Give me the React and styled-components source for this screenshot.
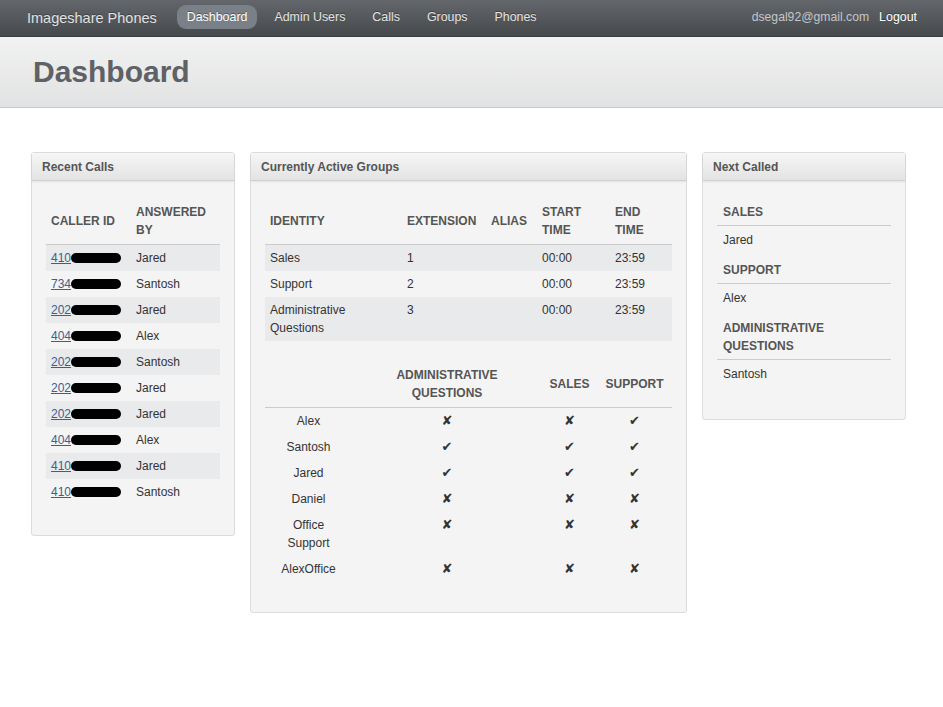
import React from "react";
import styled, { createGlobalStyle } from "styled-components";

const GlobalStyle = createGlobalStyle`
  body {
    margin: 0;
    background: #fff;
    font-family: "Liberation Sans", Arial, sans-serif;
    font-size: 12px;
    line-height: 18px;
    color: #333;
  }
`;

const recentCalls = [
  { prefix: "410", who: "Jared" },
  { prefix: "734", who: "Santosh" },
  { prefix: "202", who: "Jared" },
  { prefix: "404", who: "Alex" },
  { prefix: "202", who: "Santosh" },
  { prefix: "202", who: "Jared" },
  { prefix: "202", who: "Jared" },
  { prefix: "404", who: "Alex" },
  { prefix: "410", who: "Jared" },
  { prefix: "410", who: "Santosh" },
];

const activeGroups = [
  { name: "Sales", ext: "1" },
  { name: "Support", ext: "2" },
  { name: "Administrative Questions", ext: "3" },
];

const members = [
  { name: "Alex", admin: false, sales: false, support: true },
  { name: "Santosh", admin: true, sales: true, support: true },
  { name: "Jared", admin: true, sales: true, support: true },
  { name: "Daniel", admin: false, sales: false, support: false },
  { name: "Office Support", admin: false, sales: false, support: false },
  { name: "AlexOffice", admin: false, sales: false, support: false },
];

const nextCalled = [
  { group: "Sales", who: "Jared" },
  { group: "Support", who: "Alex" },
  { group: "Administrative Questions", who: "Santosh" },
];

export default function App() {
  return (
    <>
      <GlobalStyle />
      <NavBar>
        <Brand>Imageshare Phones</Brand>
        <NavLinks>
          <NavLink active>Dashboard</NavLink>
          <NavLink>Admin Users</NavLink>
          <NavLink>Calls</NavLink>
          <NavLink>Groups</NavLink>
          <NavLink>Phones</NavLink>
        </NavLinks>
        <NavRight>
          <Email>dsegal92@gmail.com</Email>
          <NavLink plain>Logout</NavLink>
        </NavRight>
      </NavBar>

      <PageHeader>
        <h1>Dashboard</h1>
      </PageHeader>

      <Main>
        <Panel width={204}>
          <PanelTitle>Recent Calls</PanelTitle>
          <PanelBody>
            <Table>
              <colgroup>
                <col style={{ width: 85 }} />
                <col />
              </colgroup>
              <thead>
                <tr>
                  <Th>Caller ID</Th>
                  <Th>Answered by</Th>
                </tr>
              </thead>
              <tbody>
                {recentCalls.map((c, i) => (
                  <Row key={i} striped={i % 2 === 0}>
                    <Td>
                      <PhoneLink>
                        {c.prefix}
                        <Redacted />
                      </PhoneLink>
                    </Td>
                    <Td>{c.who}</Td>
                  </Row>
                ))}
              </tbody>
            </Table>
          </PanelBody>
        </Panel>

        <Panel width={437}>
          <PanelTitle>Currently Active Groups</PanelTitle>
          <PanelBody>
            <Table>
              <colgroup>
                <col style={{ width: 137 }} />
                <col style={{ width: 84 }} />
                <col style={{ width: 51 }} />
                <col style={{ width: 73 }} />
                <col />
              </colgroup>
              <thead>
                <tr>
                  <Th>Identity</Th>
                  <Th>Extension</Th>
                  <Th>Alias</Th>
                  <Th>Start time</Th>
                  <Th>End time</Th>
                </tr>
              </thead>
              <tbody>
                {activeGroups.map((g, i) => (
                  <Row key={g.name} striped={i % 2 === 0}>
                    <Td>{g.name}</Td>
                    <Td>{g.ext}</Td>
                    <Td></Td>
                    <Td>00:00</Td>
                    <Td>23:59</Td>
                  </Row>
                ))}
              </tbody>
            </Table>

            <MatrixTable>
              <colgroup>
                <col style={{ width: 87 }} />
                <col style={{ width: 190 }} />
                <col style={{ width: 55 }} />
                <col />
              </colgroup>
              <thead>
                <tr>
                  <Th center></Th>
                  <Th center>
                    <HeadWrap>Administrative Questions</HeadWrap>
                  </Th>
                  <Th center>Sales</Th>
                  <Th center>Support</Th>
                </tr>
              </thead>
              <tbody>
                {members.map((m) => (
                  <tr key={m.name}>
                    <NameTd>{m.name}</NameTd>
                    <Td center><Mark on={m.admin} /></Td>
                    <Td center><Mark on={m.sales} /></Td>
                    <Td center><Mark on={m.support} /></Td>
                  </tr>
                ))}
              </tbody>
            </MatrixTable>
          </PanelBody>
        </Panel>

        <Panel width={204}>
          <PanelTitle>Next Called</PanelTitle>
          <NextBody>
            {nextCalled.map((n) => (
              <React.Fragment key={n.group}>
                <GroupHead>{n.group}</GroupHead>
                <GroupItem>{n.who}</GroupItem>
              </React.Fragment>
            ))}
          </NextBody>
        </Panel>
      </Main>
    </>
  );
}

function Mark({ on }) {
  return <Glyph>{on ? "\u2714" : "\u2718"}</Glyph>;
}

const NavBar = styled.div`
  height: 36px;
  display: flex;
  align-items: center;
  padding: 0 26px 0 27px;
  background: linear-gradient(#63676b, #46494c);
  border-bottom: 1px solid #3a3c3e;
  box-shadow: 0 1px 0 #bfc1c3;
`;

const Brand = styled.div`
  font-size: 14.5px;
  color: #e2e2e2;
  margin-right: 20px;
  margin-top: -1px;
  text-shadow: 0 -1px 0 rgba(0, 0, 0, 0.3);
`;

const NavLinks = styled.div`
  display: flex;
  align-items: center;
  gap: 7px;
`;

const NavLink = styled.span`
  font-size: 12.4px;
  line-height: 14px;
  padding: ${(p) => (p.plain ? "0" : "5px 10px")};
  margin-top: -3px;
  border-radius: 9px;
  color: ${(p) => (p.active || p.plain ? "#fff" : "#e4e4e4")};
  background: ${(p) => (p.active ? "#7a8087" : "transparent")};
  text-shadow: 0 -1px 0 rgba(0, 0, 0, 0.35);
`;

const NavRight = styled.div`
  margin-left: auto;
  display: flex;
  align-items: center;
  gap: 10px;
`;

const Email = styled.span`
  font-size: 12.2px;
  margin-top: -3px;
  color: #c4c6c8;
`;

const PageHeader = styled.div`
  height: 70px;
  display: flex;
  align-items: center;
  padding-left: 33px;
  background: linear-gradient(#f2f2f2, #e1e2e3);
  border-bottom: 1px solid #c8c9ca;

  h1 {
    margin: 0;
    font-size: 30px;
    line-height: 36px;
    font-weight: bold;
    color: #5e6165;
  }
`;

const Main = styled.div`
  display: flex;
  align-items: flex-start;
  gap: 15px;
  padding: 44px 31px;
`;

const Panel = styled.div`
  width: ${(p) => p.width}px;
  box-sizing: border-box;
  background: #f4f4f4;
  border: 1px solid #dcdcdc;
  border-radius: 3px;
`;

const PanelTitle = styled.div`
  height: 27px;
  line-height: 29px;
  padding: 0 10px;
  font-weight: bold;
  color: #555;
  background: linear-gradient(#f6f6f6, #e3e3e3);
  border-bottom: 1px solid #cfcfcf;
  box-shadow: 0 1px 2px rgba(0, 0, 0, 0.08);
`;

const PanelBody = styled.div`
  padding: 17px 14px 30px;
`;

const Table = styled.table`
  width: 100%;
  border-collapse: collapse;
  table-layout: fixed;
`;

const MatrixTable = styled(Table)`
  margin-top: 20px;
`;

const Th = styled.th`
  padding: 5px 5px;
  text-align: ${(p) => (p.center ? "center" : "left")};
  vertical-align: middle;
  text-transform: uppercase;
  font-weight: bold;
  color: #555;
  border-bottom: 1px solid #cbcbcb;
`;

const HeadWrap = styled.span`
  display: inline-block;
  max-width: 110px;
`;

const Row = styled.tr`
  background: ${(p) => (p.striped ? "#e9eaeb" : "transparent")};
`;

const Td = styled.td`
  padding: 4px 5px;
  text-align: ${(p) => (p.center ? "center" : "left")};
  vertical-align: top;
`;

const NameTd = styled(Td)`
  text-align: center;
  padding: 4px 10px;
`;

const PhoneLink = styled.a`
  color: #3d5e8e;
  text-decoration: underline;
  white-space: nowrap;
`;

const Redacted = styled.span`
  display: inline-block;
  width: 50px;
  height: 10px;
  vertical-align: -1px;
  background: #000;
  border-radius: 5px;
`;

const Glyph = styled.span`
  display: inline-block;
  font-family: "DejaVu Sans", sans-serif;
  font-size: 13px;
  line-height: 18px;
  height: 18px;
  vertical-align: top;
  color: #333;
`;

const NextBody = styled.div`
  padding: 14px 14px 32px;
`;

const GroupHead = styled.div`
  padding: 8px 6px 4px;
  font-weight: bold;
  text-transform: uppercase;
  color: #555;
  border-bottom: 1px solid #cbcbcb;
`;

const GroupItem = styled.div`
  padding: 5px 6px 4px;
`;
